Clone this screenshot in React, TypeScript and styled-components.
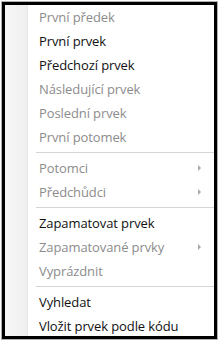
import React from "react";
import styled, { createGlobalStyle } from "styled-components";

const Global = createGlobalStyle`
  html, body { margin: 0; padding: 0; background: #ffffff; }
  body { width: 222px; height: 342px; overflow: hidden; }
`;

const Frame = styled.div`
  margin: 2px 0 0 2px;
  width: 209px;
  height: 331px;
  border: 3px solid #000;
  box-shadow: 0 0 0 1px #b0b0b0;
  background: #ffffff;
  overflow: hidden;
  display: flex;
`;

const Gutter = styled.div`
  width: 22px;
  flex: none;
  background: linear-gradient(to right, #f7f7f7, #efefef);
  border-right: 1px solid #e6e6e6;
`;

const List = styled.div`
  flex: 1;
  display: flex;
  flex-direction: column;
`;

const Item = styled.div<{ $disabled?: boolean }>`
  height: 24px;
  flex: none;
  display: flex;
  align-items: center;
  justify-content: space-between;
  padding: 0 13px 0 11px;
  font-family: "Open Sans", "Noto Sans", sans-serif;
  font-size: 13px;
  letter-spacing: -0.1px;
  color: ${(p) => (p.$disabled ? "#8c8c8c" : "#111111")};
  white-space: nowrap;
`;

const Separator = styled.div`
  height: 7px;
  flex: none;
  display: flex;
  align-items: center;
  padding-left: 8px;
  &::after {
    content: "";
    flex: 1;
    height: 1px;
    background: #d5d5d5;
    box-shadow: 0 1px 0 #ffffff;
  }
`;

const Arrow = styled.span`
  width: 0;
  height: 0;
  border-top: 3.5px solid transparent;
  border-bottom: 3.5px solid transparent;
  border-left: 3.5px solid #a8a8a8;
`;

type Entry = { label?: string; disabled?: boolean; sub?: boolean; sep?: boolean };

const entries: Entry[] = [
  { label: "První předek", disabled: true },
  { label: "První prvek" },
  { label: "Předchozí prvek" },
  { label: "Následující prvek", disabled: true },
  { label: "Poslední prvek", disabled: true },
  { label: "První potomek", disabled: true },
  { sep: true },
  { label: "Potomci", disabled: true, sub: true },
  { label: "Předchůdci", disabled: true, sub: true },
  { sep: true },
  { label: "Zapamatovat prvek" },
  { label: "Zapamatované prvky", disabled: true, sub: true },
  { label: "Vyprázdnit", disabled: true },
  { sep: true },
  { label: "Vyhledat" },
  { label: "Vložit prvek podle kódu" },
];

export default function App() {
  return (
    <>
      <Global />
      <Frame>
        <Gutter />
        <List>
          {entries.map((e, i) =>
            e.sep ? (
              <Separator key={i} />
            ) : (
              <Item key={i} $disabled={e.disabled}>
                <span>{e.label}</span>
                {e.sub && <Arrow />}
              </Item>
            )
          )}
        </List>
      </Frame>
    </>
  );
}
